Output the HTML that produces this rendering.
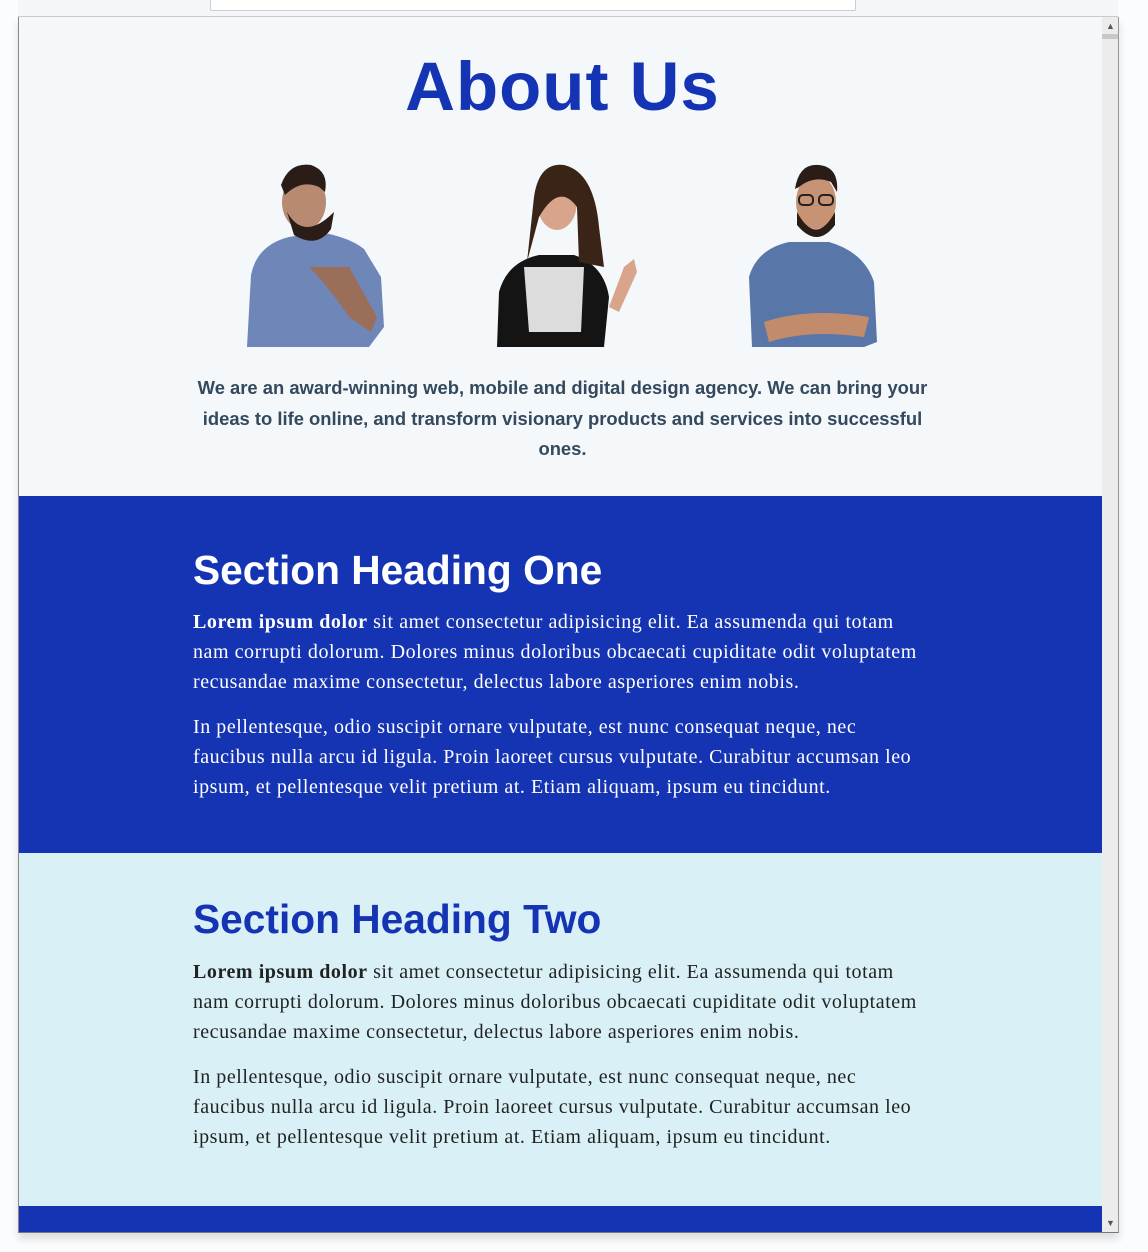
<!DOCTYPE html>
<html><head><meta charset="utf-8"><style>
*{margin:0;padding:0;box-sizing:border-box}
body{width:1148px;height:1252px;background:#fbfcfd;position:relative;overflow:hidden;font-family:"Liberation Sans",sans-serif}
.chrome{position:absolute;left:18px;top:0;width:1100px;height:17px;background:#f4f7fa;border-bottom:1px solid #ccc}
.addr{position:absolute;left:192px;top:0;width:646px;height:11px;background:#fff;border:1px solid #ccc;border-top:none;border-radius:0 0 2px 2px}
.frame{position:absolute;left:18px;top:17px;width:1101px;height:1216px;border-left:1px solid #888;border-right:1px solid #999;border-bottom:1px solid #777;box-shadow:0 6px 8px rgba(0,0,0,.12);overflow:hidden;background:#f4f8fb}
.sb{position:absolute;right:0;top:0;width:16px;height:100%;background:#ececec}
.content{position:absolute;left:0;top:0;width:1083px;height:100%}
h1{position:absolute;top:30px;left:0;width:1087px;text-align:center;color:#1434b4;font-size:69px;font-weight:bold;letter-spacing:1px}
.intro{position:absolute;top:356px;left:0;width:1087px;text-align:center;color:#34495e;font-size:18.4px;font-weight:bold;line-height:30.5px;white-space:nowrap}
.sec{position:absolute;left:0;width:1083px}
.sec h2{position:absolute;left:174px;font-size:40.7px;font-weight:bold;white-space:nowrap}
.sec p{position:absolute;left:174px;font-family:"Liberation Serif",serif;font-size:20px;letter-spacing:0.55px;line-height:30px;white-space:nowrap}
</style></head><body>
<div class="chrome"><div class="addr"></div></div>
<div class="frame">
<div class="content">
<h1>About Us</h1>
<svg style="position:absolute;left:0;top:140px" width="1083" height="200">
 <g>
  <path d="M228 190 L232 118 Q238 88 270 80 L300 75 Q330 80 345 92 L362 120 L365 170 L350 190 Z" fill="#6f86b8"/>
  <path d="M290 110 Q310 130 330 160 L352 175 L358 160 L330 110 Z" fill="#9a6e58"/>
  <ellipse cx="285" cy="45" rx="22" ry="28" fill="#b98a72"/>
  <path d="M262 28 Q270 5 292 8 Q310 14 306 35 L300 30 Q282 22 266 38 Z" fill="#2a1d17"/>
  <path d="M268 55 Q285 85 315 55 L312 72 Q298 92 275 78 Z" fill="#2a1d17"/>
 </g>
 <g>
  <path d="M478 190 L480 135 Q488 105 520 98 L555 98 Q585 108 590 140 L585 190 Z" fill="#141414"/>
  <path d="M505 110 L565 110 L562 175 L510 175 Z" fill="#dcdcdc"/>
  <ellipse cx="538" cy="45" rx="20" ry="28" fill="#d8a58c"/>
  <path d="M515 40 Q520 5 545 8 Q575 15 580 70 L585 110 L560 105 L558 50 Q540 25 520 60 L508 105 Z" fill="#3a2418"/>
  <path d="M590 150 L605 110 L615 102 L618 115 L600 155 Z" fill="#d8a58c"/>
 </g>
 <g>
  <path d="M733 190 L730 120 Q738 92 770 85 L810 85 Q845 95 855 125 L858 185 L845 190 Z" fill="#5877a8"/>
  <path d="M745 165 Q790 150 850 160 L845 180 Q790 172 750 185 Z" fill="#c28c6c"/>
  <ellipse cx="797" cy="45" rx="20" ry="27" fill="#c89274"/>
  <path d="M776 32 Q780 6 800 8 Q820 10 818 35 L812 25 Q795 18 780 30 Z" fill="#2a1d17"/>
  <path d="M778 55 Q797 90 816 55 L816 68 Q798 92 778 68 Z" fill="#2a1d17"/>
  <rect x="780" y="38" width="14" height="10" rx="4" fill="none" stroke="#222" stroke-width="2"/>
  <rect x="800" y="38" width="14" height="10" rx="4" fill="none" stroke="#222" stroke-width="2"/>
 </g>
</svg>
<div class="intro">We are an award-winning web, mobile and digital design agency. We can bring your<br>ideas to life online, and transform visionary products and services into successful<br>ones.</div>
<div class="sec" style="top:479px;height:357px;background:#1434b4;color:#fff">
 <h2 style="top:51px">Section Heading One</h2>
 <p style="top:111px"><b>Lorem ipsum dolor</b> sit amet consectetur adipisicing elit. Ea assumenda qui totam<br>nam corrupti dolorum. Dolores minus doloribus obcaecati cupiditate odit voluptatem<br>recusandae maxime consectetur, delectus labore asperiores enim nobis.</p>
 <p style="top:216px">In pellentesque, odio suscipit ornare vulputate, est nunc consequat neque, nec<br>faucibus nulla arcu id ligula. Proin laoreet cursus vulputate. Curabitur accumsan leo<br>ipsum, et pellentesque velit pretium at. Etiam aliquam, ipsum eu tincidunt.</p>
</div>
<div class="sec" style="top:836px;height:353px;background:#d9f1f6;color:#222">
 <h2 style="top:43px;color:#1434b4">Section Heading Two</h2>
 <p style="top:104px"><b>Lorem ipsum dolor</b> sit amet consectetur adipisicing elit. Ea assumenda qui totam<br>nam corrupti dolorum. Dolores minus doloribus obcaecati cupiditate odit voluptatem<br>recusandae maxime consectetur, delectus labore asperiores enim nobis.</p>
 <p style="top:209px">In pellentesque, odio suscipit ornare vulputate, est nunc consequat neque, nec<br>faucibus nulla arcu id ligula. Proin laoreet cursus vulputate. Curabitur accumsan leo<br>ipsum, et pellentesque velit pretium at. Etiam aliquam, ipsum eu tincidunt.</p>
</div>
<div class="sec" style="top:1189px;height:30px;background:#1434b4"></div>
</div>
<div class="sb">
 <div style="position:absolute;top:4px;left:4px;font-size:9px;color:#555">&#9650;</div>
 <div style="position:absolute;top:17px;left:0;width:16px;height:5px;background:#c8c8c8"></div>
 <div style="position:absolute;bottom:4px;left:4px;font-size:9px;color:#555">&#9660;</div>
</div>
</div>
</body></html>
